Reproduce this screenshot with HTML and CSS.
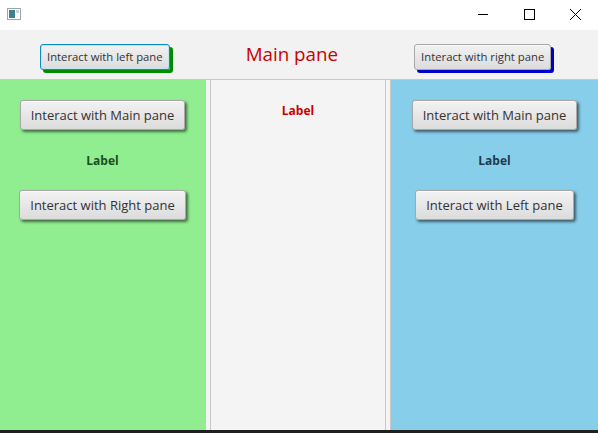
FILE: index.html
```html
<!DOCTYPE html>
<html>
<head>
<meta charset="utf-8">
<link rel="stylesheet" href="styles.css">
</head>
<body>
<div class="window">
  <div class="titlebar">
    <svg class="app-icon" width="14" height="12" viewBox="0 0 14 12">
      <rect x="0.5" y="0.5" width="13" height="11" fill="#fff" stroke="#9aa5ad"/>
      <rect x="2" y="2" width="6" height="8" fill="#3f7f8f"/>
      <rect x="9" y="2" width="3" height="3" fill="#c9d3d8"/>
    </svg>
    <div class="controls">
      <svg class="ctl" width="46" height="30" viewBox="0 0 46 30"><line x1="18" y1="14.5" x2="28" y2="14.5" stroke="#000" stroke-width="1"/></svg>
      <svg class="ctl" width="46" height="30" viewBox="0 0 46 30"><rect x="18.5" y="9.5" width="10" height="10" fill="none" stroke="#000" stroke-width="1"/></svg>
      <svg class="ctl" width="46" height="30" viewBox="0 0 46 30"><path d="M18 9 L29 20 M29 9 L18 20" stroke="#000" stroke-width="1"/></svg>
    </div>
  </div>
  <div class="toolbar">
    <button class="fx-btn small focused green-shadow">Interact with left pane</button>
    <div class="main-title">Main pane</div>
    <button class="fx-btn small blue-shadow">Interact with right pane</button>
  </div>
  <div class="split">
    <div class="pane left">
      <button class="fx-btn big shadow">Interact with Main pane</button>
      <div class="label green-label">Label</div>
      <button class="fx-btn big shadow">Interact with Right pane</button>
    </div>
    <div class="divider"></div>
    <div class="pane center">
      <div class="label red-label">Label</div>
    </div>
    <div class="divider"></div>
    <div class="pane right">
      <button class="fx-btn big shadow">Interact with Main pane</button>
      <div class="label blue-label">Label</div>
      <button class="fx-btn big shadow">Interact with Left pane</button>
    </div>
  </div>
  <div class="bottom"></div>
</div>
</body>
</html>
```

FILE: styles.css
```css
html, body {
  margin: 0;
  padding: 0;
}
body {
  width: 598px;
  height: 433px;
  overflow: hidden;
  font-family: "Open Sans", "Noto Sans", sans-serif;
  background: #fff;
}
.window {
  display: flex;
  flex-direction: column;
  height: 433px;
}
.titlebar {
  height: 30px;
  background: #fff;
  display: flex;
  align-items: center;
  flex: none;
}
.app-icon {
  margin-left: 7px;
  margin-top: -2px;
}
.controls {
  margin-left: auto;
  display: flex;
}
.ctl {
  display: block;
}
.toolbar {
  flex: none;
  height: 50px;
  box-sizing: border-box;
  background: #f2f2f2;
  border-bottom: 1px solid #c8c8c8;
  display: flex;
  align-items: center;
  padding-left: 40px;
  gap: 76px;
}
.main-title {
  color: #cc0000;
  font-size: 18.8px;
  margin-top: -2px;
}
.fx-btn {
  font-family: "Open Sans", "Noto Sans", sans-serif;
  color: #333;
  border: 1px solid #a8a8a8;
  border-radius: 3px;
  background: linear-gradient(#f2f2f2, #dcdcdc);
  box-shadow: inset 0 1px 0 #fafafa;
  padding: 0 7px;
  margin: 0;
  cursor: default;
}
.fx-btn.small {
  font-size: 11.3px;
  height: 26px;
  margin-top: 4px;
  padding: 0 6px;
}
.fx-btn.big {
  font-size: 13px;
  height: 30px;
  padding: 0 10px;
}
.fx-btn.shadow {
  box-shadow: inset 0 1px 0 #fafafa, 2px 2px 3px rgba(0, 0, 0, 0.55);
}
.fx-btn.focused {
  border-color: #0a8fc4;
}
.fx-btn.green-shadow {
  box-shadow: inset 0 0 0 1px #bfe3f1, 3px 3px 0 #008a00;
}
.fx-btn.blue-shadow {
  box-shadow: inset 0 1px 0 #fafafa, 3px 3px 0 #0000cc;
}
.split {
  flex: 1;
  display: flex;
  min-height: 0;
}
.pane {
  display: flex;
  flex-direction: column;
  align-items: center;
}
.left {
  width: 205px;
  background: #90ee90;
  padding-top: 20px;
  box-sizing: border-box;
}
.center {
  width: 174px;
  background: #f4f4f4;
  padding-top: 22px;
  box-sizing: border-box;
}
.right {
  flex: 1;
  background: #87ceeb;
  padding-top: 20px;
  box-sizing: border-box;
}
.divider {
  width: 4px;
  background: #f4f4f4;
  border-left: 1px solid #c8c8c8;
  border-right: 1px solid #c8c8c8;
  flex: none;
}
.label {
  font-weight: bold;
  font-size: 12px;
  margin: 22px 0 21px;
}
.center .label {
  margin: 0;
}
.green-label { color: #1e4d1e; }
.red-label { color: #cc0000; }
.blue-label { color: #1e3a4a; }
.bottom {
  height: 3px;
  background: #1f1f1f;
  flex: none;
}
```
